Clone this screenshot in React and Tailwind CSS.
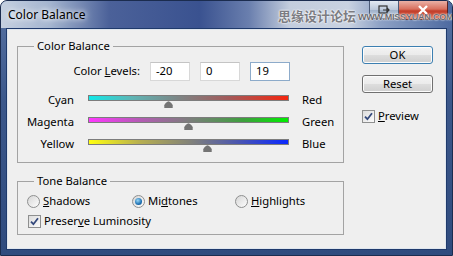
const FONT = "font-['Noto_Sans','DejaVu_Sans',sans-serif]";

const SLIDERS = [
  {
    left: "Cyan",
    right: "Red",
    value: -20,
    bar: "bg-[linear-gradient(90deg,#12e8e8,#5fb4b4_22%,#7d8585_45%,#a35a5a_70%,#f5260f)]",
  },
  {
    left: "Magenta",
    right: "Green",
    value: 0,
    bar: "bg-[linear-gradient(90deg,#ff38ff,#b55ab5_25%,#7d7d7d_50%,#3ca03c_78%,#00ee00)]",
  },
  {
    left: "Yellow",
    right: "Blue",
    value: 19,
    bar: "bg-[linear-gradient(90deg,#ffff10,#b8b050_25%,#848478_50%,#4a55b0_75%,#0a28ff)]",
  },
];

function Thumb({ value }) {
  // bar is 201px wide, -100..100 maps to 0..200
  const left = ((value + 100) / 200) * 200 - 4;
  return (
    <svg
      className="absolute top-[8px]"
      style={{ left }}
      width="9"
      height="7"
      viewBox="0 0 9 7"
    >
      <path d="M4.5 0.3C5.6 0.3 8.7 3.2 8.7 4.3V7H0.3V4.3C0.3 3.2 3.4 0.3 4.5 0.3Z" fill="#747474" />
    </svg>
  );
}

function CheckBox() {
  return (
    <span className="flex h-[13px] w-[13px] items-center justify-center border border-[#8e8f8f] bg-[linear-gradient(135deg,#dcdcdc,#fbfbfb)]">
      <svg width="9" height="9" viewBox="0 0 9 9">
        <path d="M1 4.6L3.4 7.2L8 1.2" fill="none" stroke="#34497c" strokeWidth="1.8" />
      </svg>
    </span>
  );
}

function Radio({ checked }) {
  return (
    <span className="flex h-[13px] w-[13px] items-center justify-center rounded-full border border-[#8e8f8f] bg-[linear-gradient(135deg,#d6d6d6,#fdfdfd)]">
      {checked && (
        <span className="h-[7px] w-[7px] rounded-full bg-[radial-gradient(circle_at_40%_35%,#9ad8f7,#1f72b4_60%,#0c4577)]" />
      )}
    </span>
  );
}

function Button({ children, primary }) {
  return (
    <div
      className={`flex h-[18px] w-[71px] items-center justify-center rounded-[3px] border leading-none shadow-[inset_0_0_0_1px_#fcfcfc] bg-[linear-gradient(180deg,#f3f3f3_0%,#ebebeb_48%,#dddddd_52%,#cfcfcf_100%)] ${
        primary ? "border-[#3c7fb1]" : "border-[#707070]"
      }`}
    >
      {children}
    </div>
  );
}

function GroupBox({ label, className, children }) {
  return (
    <div className={`relative border border-[#a3a3a3] ${className}`}>
      <span className="absolute left-[16px] top-[-8px] bg-[#efefef] px-[3px] leading-[14px]">{label}</span>
      {children}
    </div>
  );
}

export default function App() {
  return (
    <div
      className={`${FONT} flex h-[256px] w-[453px] flex-col overflow-hidden rounded-t-[7px] border border-[#1b2c4f] bg-[linear-gradient(180deg,#5873a3,#3b578a_40%,#2f4b7e)] text-[11.25px] text-black`}
    >
      {/* title bar */}
      <div className="relative flex h-[27px] shrink-0 items-start bg-[linear-gradient(90deg,#c5d0e0_0%,#a3b4cf_11%,#4b6199_24%,#3a5290_44%,#6a7fae_55%,#c3cddd_64%,#c9d2e1_77%,#8ea2c6_84%,#4d6aa0_100%)]">
        <span className="ml-[7px] mt-[6px] text-[12px] leading-[16px] [text-shadow:0_0_5px_#fff,0_0_8px_#fff]">
          Color Balance
        </span>
        <div className="ml-auto mr-[4px] flex">
          <div className="flex h-[18px] w-[30px] items-center justify-center rounded-bl-[4px] border border-t-0 border-[#4b5a77] bg-[linear-gradient(180deg,#e3e9f2,#bcc8da_50%,#9fb1c9_52%,#c4d2e4)]">
            <svg width="12" height="10" viewBox="0 0 12 10">
              <rect x="1" y="1" width="8" height="7" fill="none" stroke="#333" strokeWidth="1.2" />
              <path d="M5 5H11M9 3L11 5L9 7" fill="none" stroke="#333" strokeWidth="1.2" />
            </svg>
          </div>
          <div className="flex h-[19px] w-[49px] items-center justify-center rounded-br-[4px] border border-t-0 border-l-0 border-[#5b2323] bg-[linear-gradient(180deg,#eab1a6,#d9705e_45%,#c23d2a_55%,#d8654c)]">
            <svg width="12" height="10" viewBox="0 0 12 10">
              <path d="M2 1L10 9M10 1L2 9" stroke="#fff" strokeWidth="2.4" />
            </svg>
          </div>
        </div>
        {/* watermark */}
        <span className="absolute left-[277px] top-[7px] font-['Noto_Sans_CJK_SC',sans-serif] text-[13px] font-bold leading-[16px] text-[#7c7c82] [text-shadow:0_0_2px_#fff,0_0_2px_#fff]">
          思缘设计论坛
        </span>
        <span className="absolute left-[357px] top-[11px] font-['Liberation_Sans',sans-serif] text-[9px] font-bold leading-[10px] tracking-[-0.2px] text-[#6b6b70] [text-shadow:0_0_2px_#fff,0_0_1px_#fff]">
          WWW.MISSYUAN.COM
        </span>
      </div>

      {/* client */}
      <div className="flex-1 px-[5px] pb-[5px]">
        <div className="h-full border border-[#1f3a6c]">
          <div className="flex h-full border border-[#dfe6ee] bg-[#efefef]">
            <div className="pl-[9px] pt-[16px]">
              <GroupBox label="Color Balance" className="h-[117px] w-[327px] pt-[15px]">
                <div className="flex h-[19px] items-center">
                  <span className="w-[122px] text-right">
                    Color <u className="underline-offset-[1px]">L</u>evels:
                  </span>
                  <div className="ml-[10px] flex gap-[10px]">
                    <div className="flex h-[19px] w-[40px] items-center border border-[#d8d8d8] border-t-[#c4c4c4] bg-white pl-[5px]">-20</div>
                    <div className="flex h-[19px] w-[40px] items-center border border-[#d8d8d8] border-t-[#c4c4c4] bg-white pl-[5px]">0</div>
                    <div className="flex h-[19px] w-[40px] items-center border border-[#8dabca] bg-white pl-[5px]">19</div>
                  </div>
                </div>
                <div className="mt-[12px] flex flex-col">
                  {SLIDERS.map((s) => (
                    <div key={s.left} className="flex h-[22px] items-start">
                      <span className="w-[56px] text-right leading-[14px]">{s.left}</span>
                      <div className="relative ml-[14px] w-[201px]">
                        <div className={`mt-[2px] h-[6px] border border-[#7c7c7c] ${s.bar}`} />
                        <Thumb value={s.value} />
                      </div>
                      <span className="ml-[13px] leading-[14px]">{s.right}</span>
                    </div>
                  ))}
                </div>
              </GroupBox>

              <GroupBox label="Tone Balance" className="mt-[18px] h-[54px] w-[327px] pt-[12px]">
                <div className="flex h-[14px] items-center pl-[9px]">
                  <div className="flex w-[105px] items-center gap-[3px]">
                    <Radio />
                    <span>
                      <u className="underline-offset-[1px]">S</u>hadows
                    </span>
                  </div>
                  <div className="flex w-[103px] items-center gap-[3px]">
                    <Radio checked />
                    <span>
                      Mi<u className="underline-offset-[1px]">d</u>tones
                    </span>
                  </div>
                  <div className="flex items-center gap-[3px]">
                    <Radio />
                    <span>
                      <u className="underline-offset-[1px]">H</u>ighlights
                    </span>
                  </div>
                </div>
                <div className="mt-[6px] flex h-[14px] items-center gap-[3px] pl-[10px]">
                  <CheckBox />
                  <span>
                    Preser<u className="underline-offset-[1px]">v</u>e Luminosity
                  </span>
                </div>
              </GroupBox>
            </div>

            <div className="ml-[18px] flex flex-col pt-[16px]">
              <Button primary>OK</Button>
              <div className="mt-[11px]">
                <Button>Reset</Button>
              </div>
              <div className="mt-[15px] flex items-center gap-[3px]">
                <CheckBox />
                <span>
                  <u className="underline-offset-[1px]">P</u>review
                </span>
              </div>
            </div>
          </div>
        </div>
      </div>
    </div>
  );
}
